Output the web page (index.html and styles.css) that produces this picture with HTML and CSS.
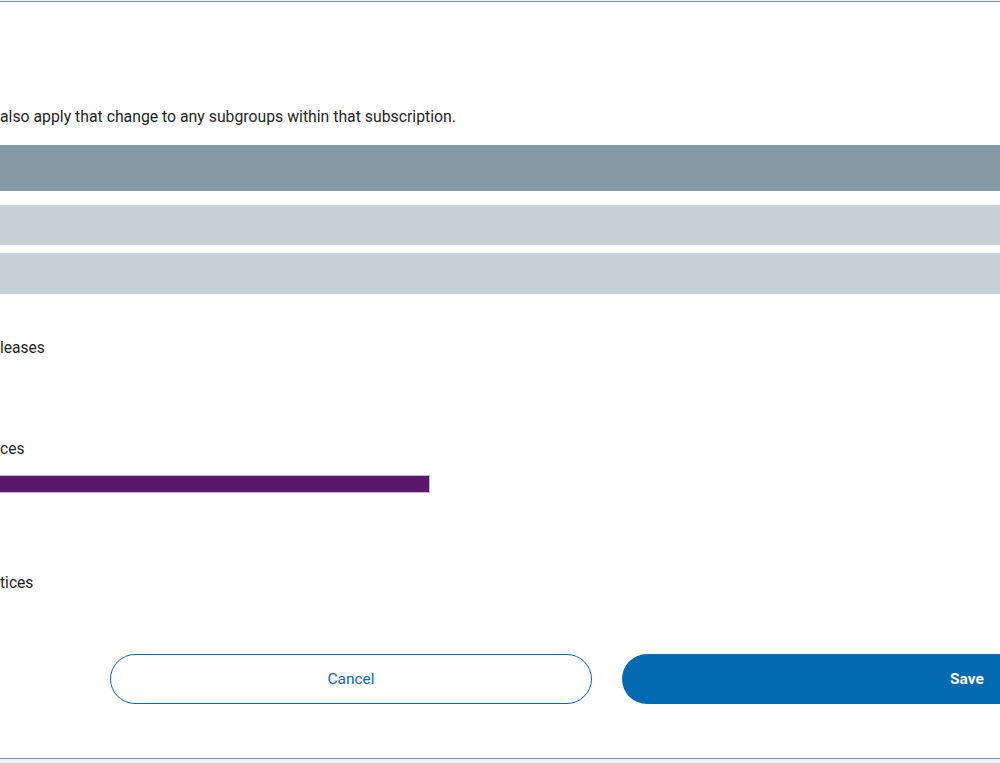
FILE: index.html
```html
<!DOCTYPE html>
<html lang="en">
<head>
<meta charset="utf-8">
<title>Subscription settings</title>
<link rel="stylesheet" href="styles.css">
</head>
<body>
<div class="page">
  <div class="modal">
    <p class="intro">also apply that change to any subgroups within that subscription.</p>
    <div class="bar bar-dark"></div>
    <div class="bar bar-light bar-first"></div>
    <div class="bar bar-light bar-second"></div>
    <p class="label label-1">leases</p>
    <p class="label label-2">ces</p>
    <div class="progress"></div>
    <p class="label label-3">tices</p>
    <div class="actions">
      <button class="btn btn-cancel">Cancel</button>
      <button class="btn btn-save">Save</button>
    </div>
  </div>
</div>
</body>
</html>
```
FILE: styles.css
```css
html, body {
  margin: 0;
  padding: 0;
  overflow: hidden;
  background: #eff2f4;
  font-family: Roboto, "Liberation Sans", Arial, sans-serif;
}
.page {
  width: 1000px;
  height: 763px;
  overflow: hidden;
  padding-top: 1px;
  box-sizing: border-box;
  background: #eff2f4;
}
.modal {
  background: #fff;
  border-top: 1px solid #7e8d96;
  border-bottom: 1px solid #7e8d96;
  height: 758px;
  box-sizing: border-box;
}
.intro {
  margin: 105px 0 0 0;
  font-size: 15.8px;
  line-height: 20px;
  color: #1f1f1f;
  white-space: nowrap;
}
.bar {
  width: 100%;
}
.bar-dark {
  margin-top: 18px;
  height: 46px;
  background: #8499a3;
}
.bar-light {
  background: #c6d1d7;
}
.bar-first {
  margin-top: 14px;
  height: 40px;
}
.bar-second {
  margin-top: 8px;
  height: 41px;
}
.label {
  margin: 0;
  font-size: 15.6px;
  line-height: 20px;
  color: #1f1f1f;
}
.label-1 { margin-top: 44px; }
.label-2 { margin-top: 81px; }
.label-3 { margin-top: 80px; }
.progress {
  margin-top: 16px;
  width: 429px;
  height: 16px;
  background: #5a196b;
  border: 1px solid #cfb3dc;
  border-left: none;
}
.actions {
  display: flex;
  gap: 30px;
  padding-left: 110px;
  margin-top: 61px;
}
.btn {
  flex: none;
  height: 50px;
  border-radius: 25px;
  font-family: Roboto, "Liberation Sans", Arial, sans-serif;
  font-size: 15.5px;
  box-sizing: border-box;
  cursor: pointer;
}
.btn-cancel {
  width: 482px;
  background: #fff;
  border: 1px solid #0a68b0;
  color: #0a68b0;
}
.btn-save {
  width: 690px;
  background: #0369b1;
  border: none;
  color: #fff;
  font-weight: 700;
}
```
